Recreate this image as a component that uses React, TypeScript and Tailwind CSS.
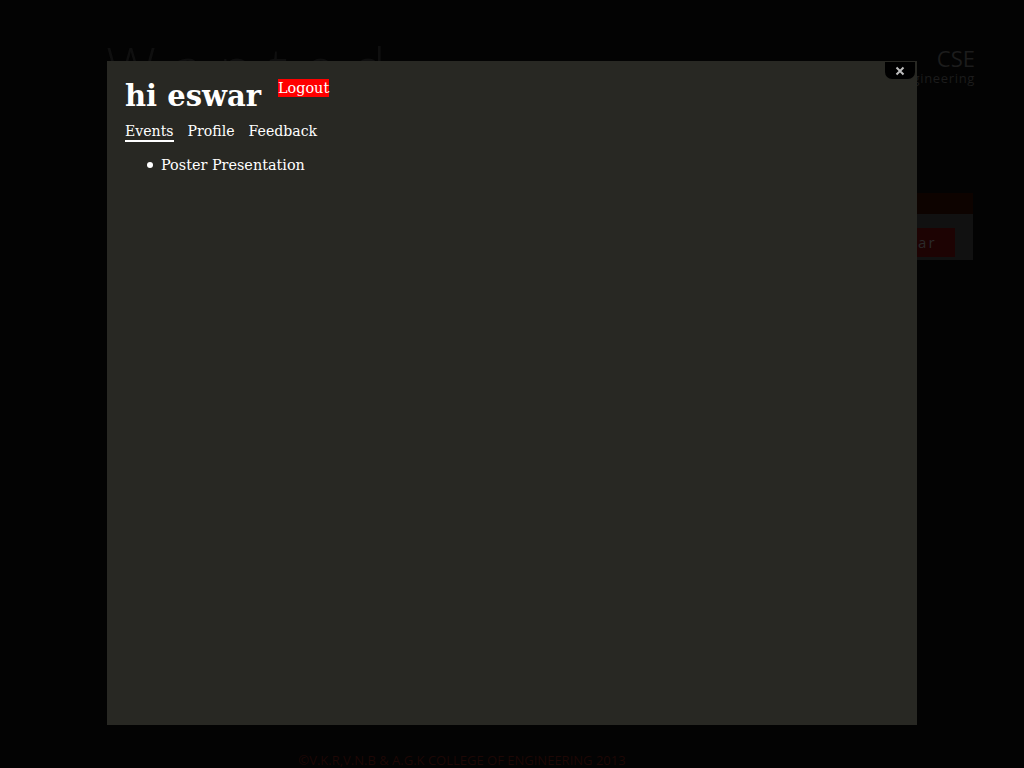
import React from 'react';

const serif = { fontFamily: '"DejaVu Serif", serif' };

export default function App() {
  return (
    <div className="relative w-[1024px] h-[768px] overflow-hidden bg-[#030303]" style={{ fontFamily: '"Open Sans", sans-serif' }}>
      {/* dimmed page behind the dialog */}
      <div className="flex justify-between px-[106px] pt-[38px]">
        <div className="text-[56px] leading-none font-light tracking-[0.3em] text-[#0f0f0f]">Wanted</div>
        <div className="flex flex-col items-end -mr-[57px] pt-[8px]">
          <span className="text-[22px] leading-[24px] text-[#1c1c1c]">CSE</span>
          <span className="text-[13px] leading-[16px] tracking-[0.05em] text-[#1c1c1c]">Computer Science &amp; Engineering</span>
        </div>
      </div>
      <div className="absolute left-[880px] top-[193px] w-[93px]">
        <div className="h-[21px] bg-[#0d0300]" />
        <div className="h-[46px] bg-[#111111] pl-[6px] pt-[14px]">
          <div className="w-[69px] h-[29px] bg-[#1d0303] text-[#2a2a2a] text-[15px] tracking-[0.15em] flex items-center justify-end pr-[18px]">Clear</div>
        </div>
      </div>
      <div className="absolute left-0 right-0 top-[751px] text-center text-[13px] text-[#1e0705] pr-[100px]">
        ©V.K.R,V.N.B &amp; A.G.K COLLEGE OF ENGINEERING 2013
      </div>

      {/* dialog */}
      <div className="absolute left-[107px] top-[61px] w-[810px] h-[664px] bg-[#282823] text-white px-[18px] pt-[18px]" style={serif}>
        <div className="absolute top-[1px] right-[2px] w-[30px] h-[17px] bg-black rounded-b-[7px] flex items-center justify-center">
          <svg width="10" height="10" viewBox="0 0 10 10">
            <path d="M1.5 1.5 L8.5 8.5 M8.5 1.5 L1.5 8.5" stroke="#bdbdbd" strokeWidth="2" />
          </svg>
        </div>
        <div className="flex items-start">
          <h1 className="text-[29px] leading-[35px] font-bold">hi eswar</h1>
          <a className="ml-[17px] bg-[#ff0000] text-white text-[14.4px] leading-[18px]">Logout</a>
        </div>
        <nav className="flex gap-[14px] mt-[7px] text-[14.1px] leading-[18px]">
          <a className="border-b-[2px] border-white pt-[1px]">Events</a>
          <a className="pt-[1px]">Profile</a>
          <a className="pt-[1px]">Feedback</a>
        </nav>
        <ul className="mt-[13px] ml-[22px] text-[14.4px] leading-[20px]">
          <li className="flex items-center gap-[8px]">
            <span className="w-[6px] h-[6px] rounded-full bg-white" />
            <span>Poster Presentation</span>
          </li>
        </ul>
      </div>
    </div>
  );
}
